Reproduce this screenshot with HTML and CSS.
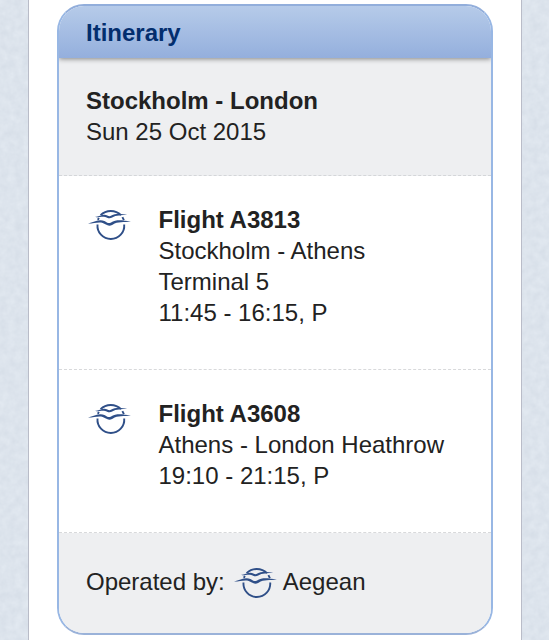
FILE: index.html
```html
<!DOCTYPE html>
<html lang="en">
<head>
    <meta charset="UTF-8">
    <meta name="viewport" content="width=device-width, initial-scale=1.0">
    <title>Itinerary</title>
    <link rel="stylesheet" href="styles.css">
</head>
<body>
    <svg class="paper" width="100%" height="100%">
        <filter id="grain" x="0" y="0" width="100%" height="100%" color-interpolation-filters="sRGB">
            <feTurbulence type="fractalNoise" baseFrequency="0.13" numOctaves="3" seed="4"/>
            <feColorMatrix values="0.06 0 0 0 0.834  0.055 0 0 0 0.865  0.045 0 0 0 0.904  0 0 0 0 1"/>
        </filter>
        <rect width="100%" height="100%" filter="url(#grain)"/>
    </svg>

    <!-- Airline logo, reused in every row -->
    <svg class="symbols">
        <symbol id="aegean" viewBox="0 0 44 32">
            <g fill="none" stroke="#2f4f88" stroke-width="1.9">
                <path d="M12.6 6.2C18 .5 27.5 .5 33 6.2"/>
                <path d="M9.9 10.8L10.8 8.9M34.4 8.2L35.9 11.2"/>
                <path d="M9.5 15.5A13.4 13.4 0 1 0 36.2 15.5"/>
            </g>
            <path fill="#2f4f88" d="M6.8 8.1C11.5 7.3 15.8 4.4 19.3 6.4C20.8 7.4 21.8 7.5 23.4 6.6C28 4 32 5.7 39.2 5C33.5 7.2 28.2 5.7 24.2 8.6C22.6 9.6 20.6 9.6 19.1 8.7C15.2 6.4 11.8 8.6 6.8 8.1Z"/>
            <path fill="#2f4f88" d="M-.2 14.6C6 13 11.2 9.6 16.4 11.9C19 13 20 14.8 22.6 13.7C29 10.1 34 11.4 43 12.6C35.5 13.8 30 12.3 24.6 15.7C22 17.2 20 17 17.9 15.6C12.5 11.4 7.5 14.6 -.2 14.6Z"/>
        </symbol>
    </svg>

    <div class="page">
        <div class="card">
            <h2 class="card-title">Itinerary</h2>
            <div class="trip">
                <p><b>Stockholm - London</b></p>
                <p>Sun 25 Oct 2015</p>
            </div>
            <div class="flight">
                <svg class="logo"><use href="#aegean"/></svg>
                <div class="details">
                    <p><b>Flight A3813</b></p>
                    <p>Stockholm - Athens</p>
                    <p>Terminal 5</p>
                    <p>11:45 - 16:15, P</p>
                </div>
            </div>
            <div class="flight">
                <svg class="logo"><use href="#aegean"/></svg>
                <div class="details">
                    <p><b>Flight A3608</b></p>
                    <p>Athens - London Heathrow</p>
                    <p>19:10 - 21:15, P</p>
                </div>
            </div>
            <div class="operator">
                <span>Operated by:</span>
                <svg class="logo"><use href="#aegean"/></svg>
                <span>Aegean</span>
            </div>
        </div>
    </div>
</body>
</html>
```

FILE: styles.css
```css
* {
    box-sizing: border-box;
}

body {
    margin: 0;
    height: 640px;
    overflow: hidden;
    background-color: #dce3ec;
    font-family: "Liberation Sans", Arial, Helvetica, sans-serif;
    font-size: 24px;
    line-height: 31px;
    color: #222;
}

p {
    margin: 0;
}

.paper {
    position: fixed;
    top: 0;
    left: 0;
    z-index: -1;
}

.symbols {
    display: none;
}

.page {
    width: 494px;
    height: 640px;
    margin-left: 28px;
    padding: 4px 28px 0;
    background-color: #fff;
    border-left: 1px solid #b9bcc8;
    border-right: 1px solid #b9bcc8;
}

.card {
    width: 436px;
    height: 631px;
    border: 2px solid #98b7e4;
    border-top-color: #92aedb;
    border-bottom-color: #9ab2d9;
    border-radius: 27px;
    overflow: hidden;
    background-color: #fff;
}

.card-title {
    position: relative;
    margin: 0;
    height: 52px;
    padding: 11px 27px 0;
    font-size: 24px;
    line-height: 31px;
    color: #032e6e;
    background: linear-gradient(#b6cbe9, #94afdd);
    box-shadow: 0 1px 5px rgba(0, 0, 0, 0.45);
}

.trip {
    height: 118px;
    padding: 27px 27px 0;
    background-color: #eeeff1;
    border-bottom: 1px dashed #d4d6d9;
}

.flight {
    display: flex;
    padding: 28px 27px 41px 29px;
    border-bottom: 1px dashed #d8d9db;
}

.logo {
    width: 44px;
    height: 32px;
    flex-shrink: 0;
    overflow: visible;
}

.flight .logo {
    margin-top: 5px;
}

.details {
    margin-left: 26.5px;
}

.operator {
    display: flex;
    height: 101px;
    padding: 33px 27px 0;
    background-color: #eeeff1;
}

.operator .logo {
    margin: 1px 5px 0 9px;
}
```
